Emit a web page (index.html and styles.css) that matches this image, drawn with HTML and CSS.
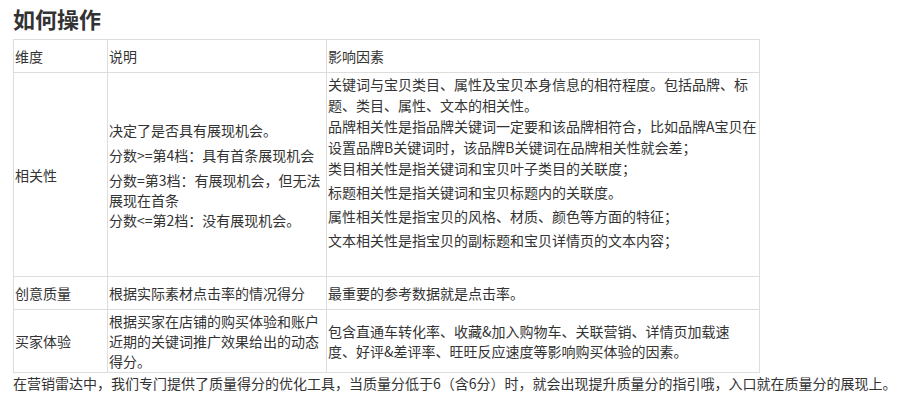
FILE: index.html
```html
<!DOCTYPE html>
<html lang="zh-CN">
<head>
<meta charset="utf-8">
<title>如何操作</title>
<link rel="stylesheet" href="styles.css">
</head>
<body>
<div class="page">
  <h2 class="title">如何操作</h2>
  <table class="grid">
    <colgroup>
      <col class="c1">
      <col class="c2">
      <col class="c3">
    </colgroup>
    <tbody>
      <tr>
        <td><p class="one">维度</p></td>
        <td><p class="one">说明</p></td>
        <td><p class="one">影响因素</p></td>
      </tr>
      <tr>
        <td>相关性</td>
        <td>
          <p class="para">决定了是否具有展现机会。</p>
          <p class="para">分数&gt;=第4档：具有首条展现机会</p>
          <p class="para">分数=第3档：有展现机会，但无法展现在首条<br>分数&lt;=第2档：没有展现机会。</p>
        </td>
        <td class="factors">
          <div class="block">关键词与宝贝类目、属性及宝贝本身信息的相符程度。包括品牌、标题、类目、属性、文本的相关性。<br>品牌相关性是指品牌关键词一定要和该品牌相符合，比如品牌A宝贝在设置品牌B关键词时，该品牌B关键词在品牌相关性就会差；<br>类目相关性是指关键词和宝贝叶子类目的关联度；</div>
          <p class="item">标题相关性是指关键词和宝贝标题内的关联度。</p>
          <p class="item">属性相关性是指宝贝的风格、材质、颜色等方面的特征；</p>
          <p class="item last">文本相关性是指宝贝的副标题和宝贝详情页的文本内容；</p>
        </td>
      </tr>
      <tr>
        <td><p class="one">创意质量</p></td>
        <td><p class="one">根据实际素材点击率的情况得分</p></td>
        <td><p class="one">最重要的参考数据就是点击率。</p></td>
      </tr>
      <tr>
        <td>买家体验</td>
        <td>根据买家在店铺的购买体验和账户近期的关键词推广效果给出的动态得分。</td>
        <td>包含直通车转化率、收藏&amp;加入购物车、关联营销、详情页加载速度、好评&amp;差评率、旺旺反应速度等影响购买体验的因素。</td>
      </tr>
    </tbody>
  </table>
  <p class="note">在营销雷达中，我们专门提供了质量得分的优化工具，当质量分低于6（含6分）时，就会出现提升质量分的指引哦，入口就在质量分的展现上。</p>
</div>
</body>
</html>
```
FILE: styles.css
```css
html, body {
  margin: 0;
  padding: 0;
  background: #fff;
}
body {
  font-family: "Noto Sans CJK SC", "Noto Sans", sans-serif;
  font-size: 14px;
  line-height: 20px;
  color: #333;
}
.page {
  padding-left: 13px;
}
.title {
  font-size: 22px;
  line-height: 30px;
  font-weight: bold;
  margin: 3px 0 6px;
  color: #333;
}
.grid {
  border-collapse: collapse;
  table-layout: fixed;
  width: 746px;
}
.c1 { width: 94px; }
.c2 { width: 219px; }
.c3 { width: 433px; }
.grid td {
  border: 1px solid #ddd;
  padding: 1px;
  vertical-align: middle;
  text-align: left;
}
.grid td:last-child {
  padding-right: 2px;
}
.one {
  margin: 5px 0;
}
.para {
  margin: 5px 0 0;
}
.para:first-child {
  margin-top: 0;
}
.factors {
  line-height: 21px;
}
.factors .block {
  margin: 0;
}
.item {
  margin: 3px 0 0;
}
.item.last {
  margin-bottom: 24px;
}
.note {
  margin: 0;
  line-height: 20px;
}
```
